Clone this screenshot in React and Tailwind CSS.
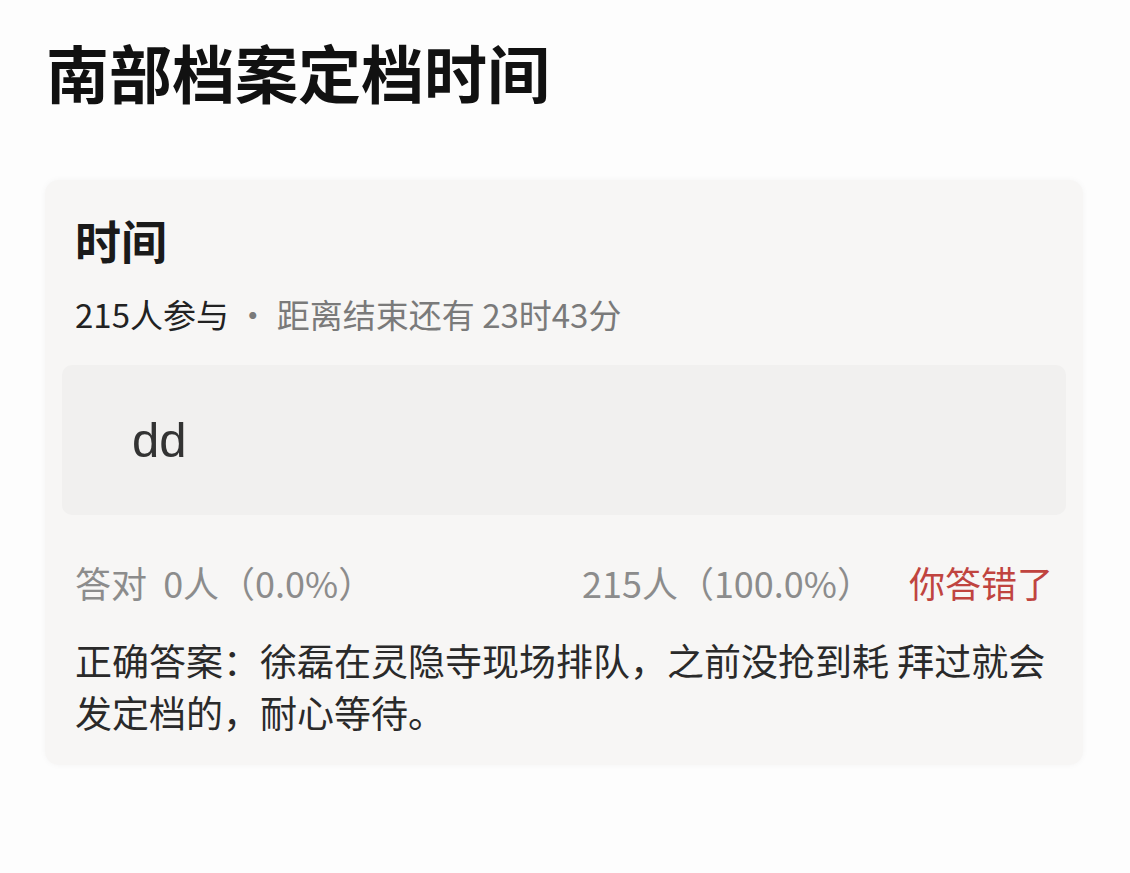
export default function App() {
  const font = { fontFamily: '"Noto Sans CJK SC", "Noto Sans", sans-serif' };
  return (
    <div className="w-[1130px] h-[873px] bg-[#fdfdfd] overflow-hidden" style={font}>
      <h1 className="pl-[46px] pt-[39px] text-[63px] leading-none font-semibold text-[#111]">
        南部档案定档时间
      </h1>

      <div className="mt-[78px] ml-[45px] w-[1038px] rounded-[14px] bg-[#f7f6f5] px-[30px] pt-[36px] pb-[27px] shadow-[0_0_6px_rgba(0,0,0,0.04)]">
        <h2 className="text-[46px] leading-none font-bold text-[#1a1a1a]">时间</h2>
        <div className="mt-[36px] text-[33px] leading-none text-[#7a7a7a]">
          <span className="text-[#222]">215人参与</span>
          <span> · 距离结束还有 23时43分</span>
        </div>

        <div className="mt-[34px] -mx-[13px] h-[150px] rounded-[10px] bg-[#f1f0ef] flex items-center pl-[70px]">
          <span
            className="text-[49px] leading-none text-[#333]"
            style={{ fontFamily: '"Liberation Sans", Arial, sans-serif' }}
          >
            dd
          </span>
        </div>

        <div className="mt-[49px] flex items-center text-[36px] leading-none text-[#8c8c8c]">
          <span>答对&nbsp;&nbsp;0人（0.0%）</span>
          <span className="ml-auto">215人（100.0%）</span>
          <span className="ml-[36px] text-[#c0443f]">你答错了</span>
        </div>

        <p className="mt-[34px] text-[37px] leading-[52px] text-[#2a2a2a]">
          正确答案：徐磊在灵隐寺现场排队，之前没抢到耗 拜过就会
          <br />
          发定档的，耐心等待。
        </p>
      </div>
    </div>
  );
}
